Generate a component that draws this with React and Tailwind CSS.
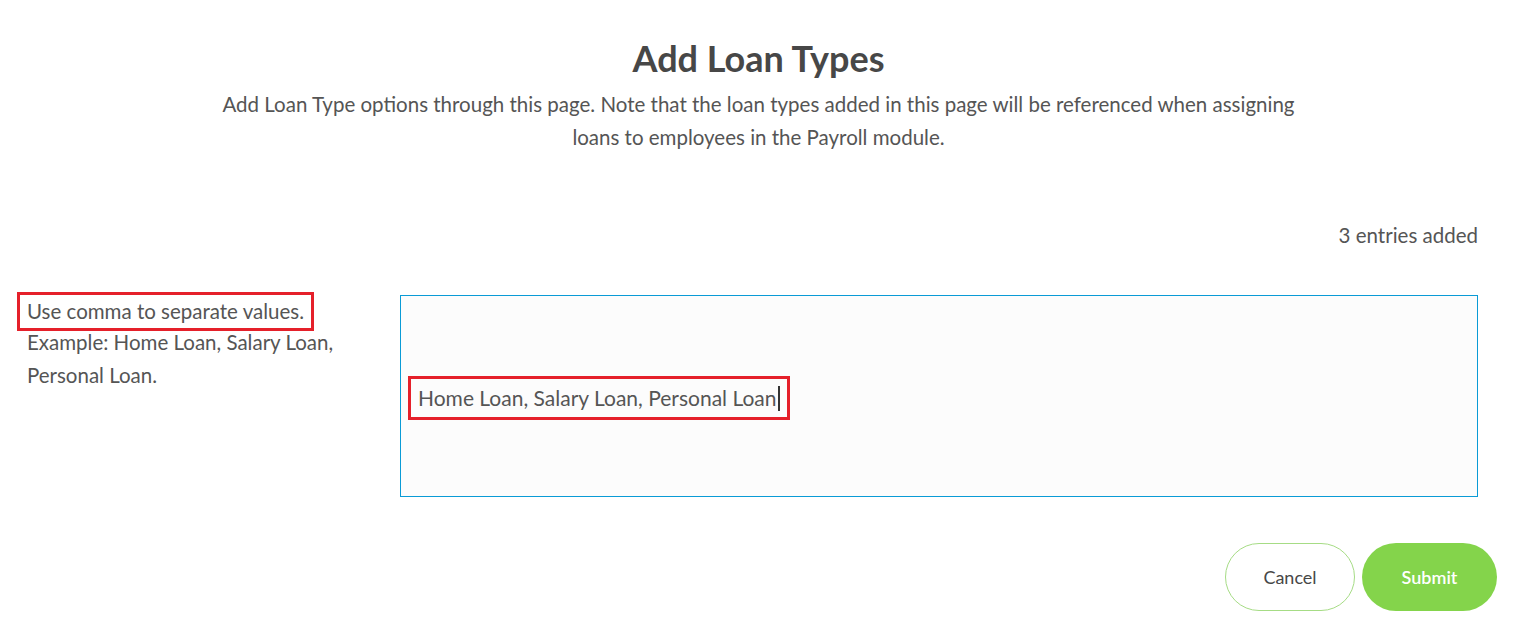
export default function App() {
  return (
    <div
      className="w-full min-h-screen bg-white text-[#4a4a4a]"
      style={{ fontFamily: 'Lato, "Liberation Sans", sans-serif' }}
    >
      <div className="pt-[37px] text-center">
        <h1 className="text-[36px] leading-[42px] font-bold text-[#474747]">Add Loan Types</h1>
        <p className="mx-auto mt-[9px] max-w-[1100px] text-[20.5px] leading-[33px] text-[#555]">
          Add Loan Type options through this page. Note that the loan types added in this page will be referenced when assigning
          loans to employees in the Payroll module.
        </p>
      </div>

      <div className="mt-[67px] pr-[39px] text-right text-[20.5px] leading-[28px] text-[#555]">3 entries added</div>

      <div className="mt-[43px] flex pl-[17px] pr-[39px]">
        <div className="w-[383px] shrink-0 text-[20.5px] leading-[32.5px] text-[#555]">
          <span className="inline-block border-[3px] border-[#e5202a] px-[7px] leading-[33px]">Use comma to separate values.</span>
          <div className="-mt-[5px] pl-[10px]">
            Example: Home Loan, Salary Loan,
            <br />
            Personal Loan.
          </div>
        </div>
        <div className="mt-[3px] flex h-[202px] flex-1 items-center border border-[#0a9bd6] bg-[#fcfcfc] pl-[7px]">
          <span className="mt-[4px] inline-flex items-center border-[3px] border-[#e5202a] px-[7px] py-[3px] text-[21px] leading-[32px] text-[#555]">
            Home Loan, Salary Loan, Personal Loan
            <span className="ml-[1px] inline-block h-[25px] w-[2px] bg-[#333]"></span>
          </span>
        </div>
      </div>

      <div className="mt-[46px] flex justify-end gap-[7px] pr-[20px]">
        <button className="h-[68px] w-[130px] rounded-full border border-[#a6dc85] bg-white text-[18px] text-[#474747]">
          Cancel
        </button>
        <button className="h-[68px] w-[135px] rounded-full bg-[#84d44b] text-[18px] font-semibold text-white">
          Submit
        </button>
      </div>
    </div>
  )
}
